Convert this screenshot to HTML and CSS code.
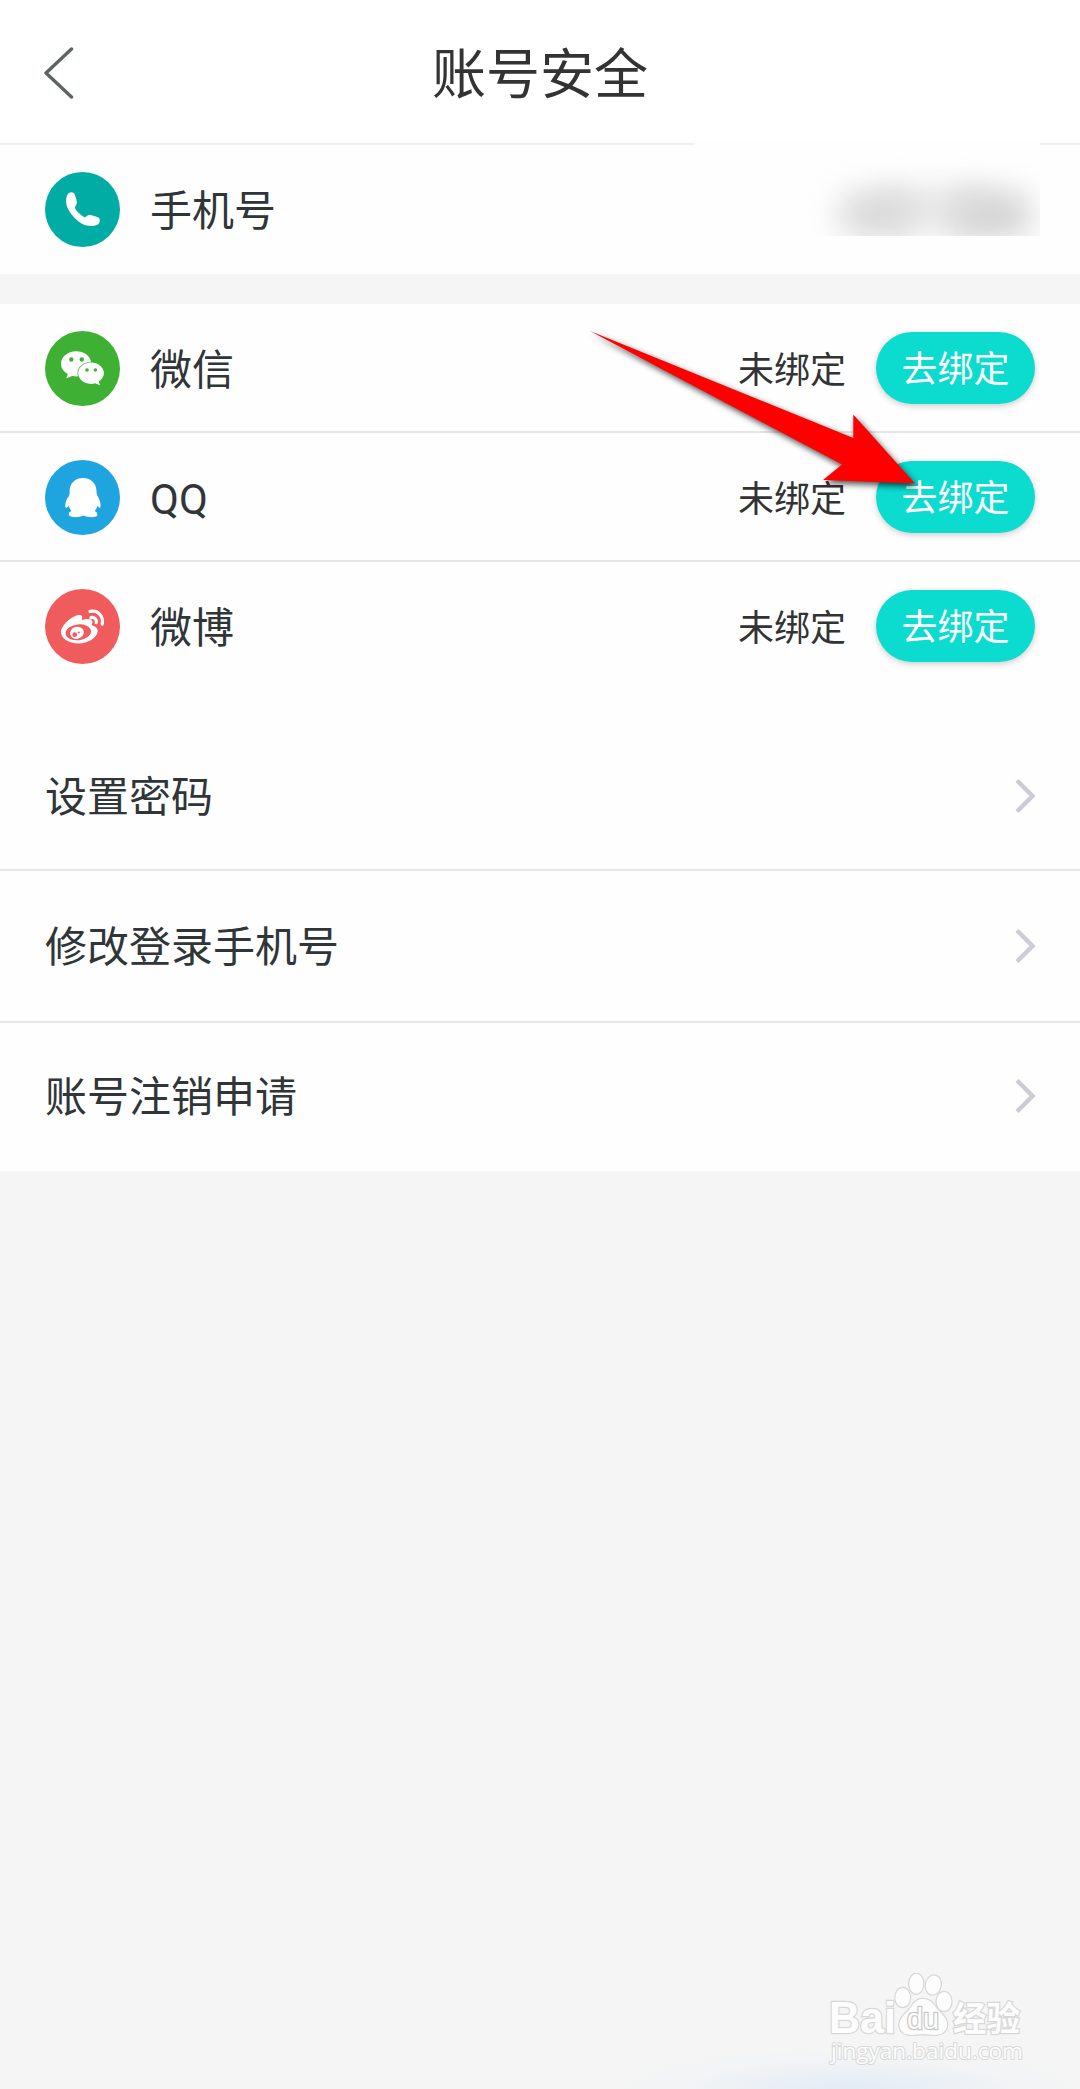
FILE: index.html
```html
<!DOCTYPE html>
<html lang="zh-CN">
<head>
    <meta charset="UTF-8">
    <meta name="viewport" content="width=device-width, initial-scale=1.0">
    <title>账号安全</title>
    <link rel="stylesheet" href="styles.css">
</head>
<body>

<header class="header">
    <a class="back" href="#">
        <svg width="32" height="52" viewBox="0 0 32 52"><path d="M28.500 2 L3 26 L28.500 50" fill="none" stroke="#5c6464" stroke-width="3.400" stroke-linecap="round" stroke-linejoin="round"/></svg>
    </a>
    <h1>账号安全</h1>
</header>

<section class="phone">
    <div class="row">
        <svg class="icon" viewBox="0 0 75 75">
            <circle cx="37.500" cy="37.500" r="37.500" fill="#00aca3"/>
            <path d="M22.500 22.500 C24.500 19.700 28.500 19.600 29.700 22.500 C31 26 32.200 29.500 31.800 31.500 C31.300 33.500 29.500 34.500 30.200 36.500 C32 39.500 36 43.500 39.500 45.300 C41 45.500 41.500 43.500 44 43.100 C47.500 43.200 51 44.600 53.500 45.600 C55.500 47 55 50.500 53.200 52.300 C50 54.600 43 54.600 38.500 52.600 C31 49 24 40.500 21.600 33.500 C20.700 29.500 21 25 22.500 22.500 Z" fill="#fff"/>
        </svg>
        <span class="name">手机号</span>
    </div>
    <div class="mask"><i class="smudge smudge-a"></i><i class="smudge smudge-b"></i><i class="smudge smudge-c"></i></div>
</section>

<section class="accounts">
    <div class="row">
        <svg class="icon" viewBox="0 0 75 75">
            <circle cx="37.500" cy="37.500" r="37.500" fill="#3eb135"/>
            <path d="M31 20.200 C39 20.200 45.300 24.800 46 31 C38.500 31 32.500 35.800 32.500 42 C32.500 43.200 32.700 44.300 33 45.300 C31.500 45.500 29 45.300 27.200 44.900 L21.300 47.200 L22.800 43 C18.500 40.700 16 36.900 16 32.800 C16 25.800 22.700 20.200 31 20.200 Z" fill="#fff"/>
            <path d="M46 31.400 C53 31.400 58.900 36.300 58.900 42 C58.900 45.500 57 48.400 53.800 50.500 L54.900 54.300 L50.200 52.200 C48.800 52.700 47.500 52.900 46 52.900 C38.800 52.900 33.200 48.100 33.200 42.100 C33.200 36.200 38.800 31.400 46 31.400 Z" fill="#fff"/>
            <g fill="#3eb135"><circle cx="26.300" cy="28.500" r="2.200"/><circle cx="36.800" cy="28.500" r="2.200"/><circle cx="42" cy="39" r="1.800"/><circle cx="50.400" cy="39" r="1.800"/></g>
        </svg>
        <span class="name">微信</span>
        <span class="status">未绑定</span>
        <button class="bind" type="button">去绑定</button>
    </div>
    <div class="row">
        <svg class="icon" viewBox="0 0 75 75">
            <circle cx="37.500" cy="37.500" r="37.500" fill="#1ea5e0"/>
            <path d="M38 18 C46.500 18 51.500 24 51.500 31 C51.500 33 51.800 34.500 52.500 36 C54.500 39 56 43 55.500 47 C55 48.500 54 48 52.500 45.800 C52 48 51 49.500 49.800 51 C52 52 53 54 52 56 C49.500 57.800 42 57.300 38.500 55.500 C34 57.500 27 57.800 24.500 55.800 C23 54 24 52 26.500 51 C25.200 49.500 24.300 48 23.700 45.800 C22 48 20.800 48.500 20.400 47 C19.800 43 21.500 39 24 36 C24.700 34.500 24.600 33 24.600 31 C24.600 24 29.500 18 38 18 Z" fill="#fff"/>
        </svg>
        <span class="name">QQ</span>
        <span class="status">未绑定</span>
        <button class="bind" type="button">去绑定</button>
    </div>
    <div class="row">
        <svg class="icon" viewBox="0 0 75 75">
            <circle cx="37.500" cy="37.500" r="37.500" fill="#f05b5e"/>
            <path d="M34 26 C37.500 25.500 37.500 28.500 36.800 31 C41 29.600 47 29 47.400 32.500 C47.600 34 47 35 46.600 36 C49.500 37 53 38.500 52.600 42.500 C52 49 43 54.400 33.500 54.400 C24 54.400 16 49.800 16 43 C16 36.500 27 26.500 34 26 Z" fill="#fff"/>
            <ellipse cx="33.300" cy="43.300" rx="12.800" ry="7.900" transform="rotate(-7 33.300 43.300)" fill="#f05b5e"/>
            <ellipse cx="32" cy="43.800" rx="7" ry="6" transform="rotate(-15 32 43.800)" fill="#fff"/>
            <circle cx="29.700" cy="45.700" r="2.400" fill="#f05b5e"/>
            <circle cx="33.800" cy="43.500" r="1" fill="#f05b5e"/>
            <path d="M45 22.400 C52.500 20.500 59 27 57.200 35.200 M46 28.600 C49.500 27.800 52 30.500 51.200 33.600" fill="none" stroke="#fff" stroke-width="3.200" stroke-linecap="round"/>
        </svg>
        <span class="name">微博</span>
        <span class="status">未绑定</span>
        <button class="bind" type="button">去绑定</button>
    </div>
    <svg class="arrow" width="350" height="175" viewBox="0 0 350 175"><path d="M10 7 L273.300 114 V90.500 L335 159.500 L243 156 L262 140.500 Z" fill="#f00"/></svg>
</section>

<section class="settings">
    <a class="item" href="#">
        <span>设置密码</span>
        <svg width="22" height="34" viewBox="0 0 22 34"><path d="M2 1.500 L17.500 17 L2 32.500" fill="none" stroke="#cdcbd5" stroke-width="4.400"/></svg>
    </a>
    <a class="item" href="#">
        <span>修改登录手机号</span>
        <svg width="22" height="34" viewBox="0 0 22 34"><path d="M2 1.500 L17.500 17 L2 32.500" fill="none" stroke="#cdcbd5" stroke-width="4.400"/></svg>
    </a>
    <a class="item" href="#">
        <span>账号注销申请</span>
        <svg width="22" height="34" viewBox="0 0 22 34"><path d="M2 1.500 L17.500 17 L2 32.500" fill="none" stroke="#cdcbd5" stroke-width="4.400"/></svg>
    </a>
</section>

<footer class="footer">
    <svg class="watermark" width="210" height="104" viewBox="0 0 210 104">
        <g class="mark">
            <text class="bai" x="5" y="60" textLength="67" lengthAdjust="spacingAndGlyphs">Bai</text>
            <ellipse cx="78.700" cy="24.500" rx="7.300" ry="9.500"/>
            <ellipse cx="92.300" cy="10.700" rx="7" ry="10"/>
            <ellipse cx="109.300" cy="12" rx="7.400" ry="9.500" transform="rotate(12 109.300 12)"/>
            <ellipse cx="120" cy="28.500" rx="7.400" ry="9.500"/>
            <path d="M99 26 C108 26 110 33 115 38 C120 43 125 48 122.500 55 C119 64 109 62 99 61 C89 62 79 64 76 55 C73.500 48 79 43 84 38 C89 33 90 26 99 26 Z"/>
            <text class="du" x="83" y="56" textLength="32" lengthAdjust="spacingAndGlyphs">du</text>
            <text class="jing" x="129" y="58" textLength="67" lengthAdjust="spacingAndGlyphs">经验</text>
            <text class="url" x="7" y="86" textLength="192" lengthAdjust="spacingAndGlyphs">jingyan.baidu.com</text>
        </g>
    </svg>
</footer>

</body>
</html>
```
FILE: styles.css
```css
* {
    box-sizing: border-box;
}

body {
    margin: 0;
    min-height: 2089px;
    display: flex;
    flex-direction: column;
    font-family: Roboto, "Noto Sans CJK SC", sans-serif;
    background-color: #f5f5f5;
    color: #303538;
}

.header {
    display: grid;
    grid-template-columns: 180px 1fr 180px;
    align-items: center;
    height: 145px;
    background-color: #fff;
    border-bottom: 2px solid #efefef;
}

.header h1 {
    margin: 0;
    padding-top: 8px;
    font-size: 54px;
    font-weight: 400;
    line-height: 80px;
    text-align: center;
    color: #333;
}

.back {
    padding-left: 43px;
    line-height: 0;
    padding-top: 3px;
}

.phone {
    position: relative;
    height: 129px;
    margin-bottom: 30px;
    background-color: #fefefe;
}

.row {
    display: flex;
    align-items: center;
    height: 129px;
    padding: 2px 45px 0;
    border-bottom: 2px solid #e5e5e5;
}

.phone .row,
.accounts .row:nth-child(3) {
    border-bottom-color: transparent;
}

.icon {
    width: 75px;
    height: 75px;
    margin-right: 30px;
}

.name {
    font-size: 42px;
    line-height: 60px;
    padding-top: 4px;
}

/* hidden phone number */
.mask {
    position: absolute;
    top: -6px;
    left: 695px;
    width: 345px;
    height: 97px;
    overflow: hidden;
    background-color: #fefefe;
}

.smudge {
    position: absolute;
    border-radius: 20px;
    filter: blur(16px);
}

.smudge-a {
    left: 144px;
    top: 54px;
    width: 78px;
    height: 42px;
    background-color: #d6d6d6;
}

.smudge-b {
    left: 252px;
    top: 54px;
    width: 84px;
    height: 44px;
    background-color: #d0d0d0;
}

.smudge-c {
    left: 180px;
    top: 52px;
    width: 120px;
    height: 34px;
    background-color: rgba(218, 218, 218, 0.7);
}

.accounts {
    position: relative;
    height: 418px;
    background-color: #fefefe;
}

.status {
    margin-left: auto;
    margin-right: 30px;
    padding-bottom: 4px;
    font-size: 36px;
    color: #333;
}

.bind {
    width: 159px;
    height: 72px;
    margin-bottom: 1px;
    padding: 0 0 4px;
    border: none;
    border-radius: 36px;
    background-color: #0cdbd0;
    box-shadow: 0 2px 6px rgba(0, 0, 0, 0.2);
    font-family: inherit;
    font-size: 36px;
    color: #fff;
}

.arrow {
    position: absolute;
    left: 580px;
    top: 20px;
    filter: drop-shadow(2px 3px 3px rgba(0, 0, 0, 0.7));
}

.settings {
    background-color: #fefefe;
}

.item {
    display: flex;
    align-items: center;
    justify-content: space-between;
    height: 152px;
    padding: 0 43px 0 45px;
    border-bottom: 2px solid #e5e5e5;
    font-size: 42px;
    line-height: 60px;
    color: #303538;
    text-decoration: none;
}

.item span {
    padding-top: 4px;
}

.item:first-child {
    height: 149px;
}

.item:last-child {
    height: 148px;
    padding-bottom: 2px;
    border-bottom: none;
}

.footer {
    flex: 1;
    display: flex;
    align-items: flex-end;
    justify-content: flex-end;
    padding: 0 46px 12px 0;
    background-image: radial-gradient(ellipse 240px 42px at 850px 100%, #e2ebf6, rgba(240, 243, 245, 0.8) 65%, transparent);
}

.mark {
    fill: #fdfdfd;
    stroke: #d8d8d8;
    stroke-width: 2.5px;
    paint-order: stroke;
    font-family: "Open Sans", "Noto Sans", sans-serif;
}

.bai {
    font-family: "Liberation Sans", sans-serif;
    font-size: 44px;
    font-weight: 700;
}

.du {
    font-family: "Liberation Sans", sans-serif;
    font-size: 29px;
    stroke: #c8c8c8;
}

.jing {
    font-family: "Noto Sans CJK SC", sans-serif;
    font-size: 34px;
    font-weight: 700;
}

.url {
    font-size: 22px;
    stroke-width: 2px;
}
```
